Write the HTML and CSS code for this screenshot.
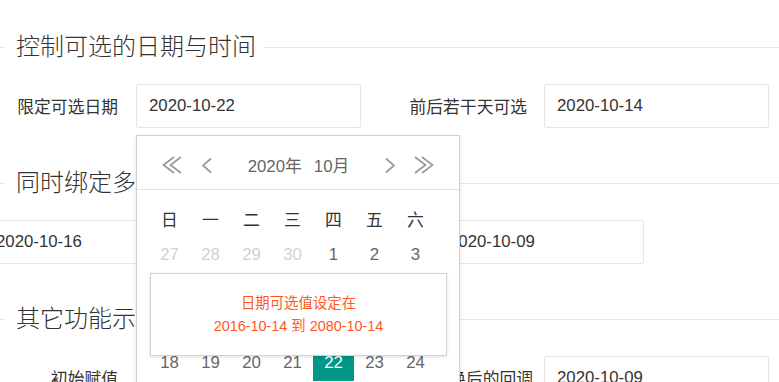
FILE: index.html
```html
<!DOCTYPE html>
<html lang="zh-CN">
<head>
<meta charset="utf-8">
<title>laydate</title>
<link rel="stylesheet" href="styles.css">
</head>
<body>
<div class="page">
  <section class="field">
    <div class="field-title"><span class="rule-start"></span><h2 class="legend">控制可选的日期与时间</h2><span class="rule-end"></span></div>
    <div class="row">
      <label class="label label-a">限定可选日期</label>
      <input class="input" value="2020-10-22" readonly>
      <label class="label label-b">前后若干天可选</label>
      <input class="input" value="2020-10-14" readonly>
    </div>
  </section>
  <section class="field">
    <div class="field-title"><span class="rule-start"></span><h2 class="legend">同时绑定多个控件</h2><span class="rule-end"></span></div>
    <div class="row row-multi">
      <input class="input" value="2020-10-16" readonly>
      <input class="input input-narrow" value="2020-10-09" readonly>
    </div>
  </section>
  <section class="field">
    <div class="field-title"><span class="rule-start"></span><h2 class="legend">其它功能示例</h2><span class="rule-end"></span></div>
    <div class="row">
      <label class="label label-a">初始赋值</label>
      <input class="input" value="2020-10-22" readonly>
      <label class="label label-c">日期切换后的回调</label>
      <input class="input" value="2020-10-09" readonly>
    </div>
  </section>
</div>

<div class="laydate">
  <div class="ld-header">
    <svg class="ico ico-dbl ico-first" viewBox="0 0 20 18"><polyline points="12,1 1.5,9 12,17"/><polyline points="19,1 8.5,9 19,17"/></svg>
    <svg class="ico ico-one ico-prev" viewBox="0 0 12 18"><polyline points="10,2.5 2,9.5 10,16.5"/></svg>
    <div class="ld-title"><span>2020年</span><span>10月</span></div>
    <svg class="ico ico-one" viewBox="0 0 12 18"><polyline points="2,2.5 10,9.5 2,16.5"/></svg>
    <svg class="ico ico-dbl ico-last" viewBox="0 0 20 18"><polyline points="1,1 11.5,9 1,17"/><polyline points="8,1 18.5,9 8,17"/></svg>
  </div>
  <div class="ld-content">
    <div class="ld-week"><span>日</span><span>一</span><span>二</span><span>三</span><span>四</span><span>五</span><span>六</span></div>
    <div class="ld-days">
      <span class="other">27</span><span class="other">28</span><span class="other">29</span><span class="other">30</span><span>1</span><span>2</span><span>3</span>
      <span>4</span><span>5</span><span>6</span><span>7</span><span>8</span><span>9</span><span>10</span>
      <span>11</span><span>12</span><span>13</span><span>14</span><span>15</span><span>16</span><span>17</span>
      <span>18</span><span>19</span><span>20</span><span>21</span><span class="this">22</span><span>23</span><span>24</span>
      <span>25</span><span>26</span><span>27</span><span>28</span><span>29</span><span>30</span><span>31</span>
    </div>
  </div>
  <div class="ld-hint">日期可选值设定在<br>2016-10-14 到 2080-10-14</div>
</div>
</body>
</html>
```
FILE: styles.css
```css
html, body {
  margin: 0;
  padding: 0;
}
body {
  width: 779px;
  height: 382px;
  overflow: hidden;
  position: relative;
  background: #fff;
  color: #333;
  font-family: "Liberation Sans", "Noto Sans CJK SC", sans-serif;
}
.page {
  padding-top: 33px;
}
.field {
  margin-bottom: 41px;
}
.field-title {
  display: flex;
  height: 28px;
}
.rule-start,
.rule-end {
  height: 1px;
  margin-top: 14px;
  background: #e6e6e6;
}
.rule-start {
  width: 5px;
  flex: none;
}
.rule-end {
  flex: 1;
}
.legend {
  margin: 0;
  padding: 0 9px 0 11px;
  font-size: 24px;
  font-weight: 300;
  line-height: 28px;
  white-space: nowrap;
  color: #333;
}
.row {
  display: flex;
  align-items: center;
  height: 44px;
  margin-top: 23px;
}
.row-multi {
  margin-left: -17px;
  gap: 228px;
}
.label {
  box-sizing: border-box;
  flex: none;
  font-size: 16.8px;
  text-align: right;
  white-space: nowrap;
  color: #333;
}
.label-a {
  width: 136px;
  padding-right: 18px;
}
.label-b {
  width: 183px;
  padding-right: 17px;
}
.label-c {
  width: 183px;
  padding-right: 11px;
}
.input {
  box-sizing: border-box;
  flex: none;
  width: 225px;
  height: 44px;
  margin: 0;
  padding: 0 12px;
  border: 1px solid #e6e6e6;
  border-radius: 2px;
  background: #fff;
  color: #333;
  font-family: "Liberation Sans", "Noto Sans CJK SC", sans-serif;
  font-size: 16.8px;
  outline: none;
}
.input-narrow {
  width: 208px;
}

/* date picker */
.laydate {
  position: absolute;
  left: 136px;
  top: 135px;
  width: 324px;
  height: 280px;
  box-sizing: border-box;
  border: 1px solid #d2d2d2;
  background: #fff;
  box-shadow: 0 2px 4px rgba(0, 0, 0, 0.12);
}
.ld-header {
  box-sizing: border-box;
  display: flex;
  align-items: center;
  height: 54px;
  padding-top: 5px;
  border-bottom: 1px solid #e2e2e2;
}
.ico {
  flex: none;
  height: 18px;
  fill: none;
  stroke: #9a9a9a;
  stroke-width: 1.7;
}
.ico-dbl {
  width: 20px;
}
.ico-one {
  width: 12px;
}
.ico-first {
  margin-left: 25px;
}
.ico-prev {
  margin-left: 19px;
}
.ico-last {
  margin-left: 18px;
  margin-right: 25px;
}
.ld-title {
  flex: 1;
  display: flex;
  justify-content: center;
  font-size: 16.8px;
  color: #666;
}
.ld-title span {
  padding: 0 6px;
}
.ld-content {
  padding: 15px 0 0 12px;
}
.ld-week,
.ld-days {
  display: grid;
  grid-template-columns: repeat(7, 41px);
  font-size: 16.8px;
  text-align: center;
}
.ld-week span {
  height: 32px;
  line-height: 32px;
  color: #333;
}
.ld-days span {
  height: 36px;
  line-height: 36px;
  color: #666;
}
.ld-days .other {
  color: #d2d2d2;
}
.ld-days .this {
  background: #009688;
  color: #fff;
}
.ld-hint {
  position: absolute;
  left: 13px;
  top: 137px;
  box-sizing: border-box;
  width: 297px;
  height: 83px;
  padding-top: 18px;
  border: 1px solid #d2d2d2;
  background: #fff;
  box-shadow: 0 1px 3px rgba(0, 0, 0, 0.12);
  color: #ff5722;
  font-size: 14.4px;
  line-height: 22.7px;
  text-align: center;
}
```
